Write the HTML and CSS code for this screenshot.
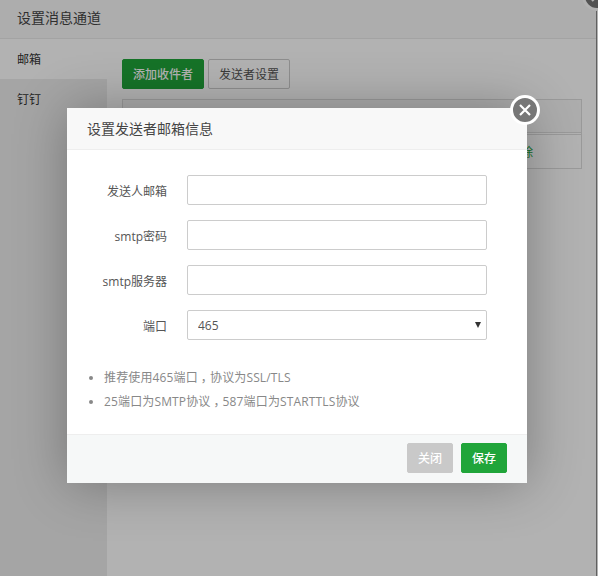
FILE: index.html
```html
<!DOCTYPE html>
<html lang="zh-CN">
<head>
<meta charset="utf-8">
<title>设置消息通道</title>
<link rel="stylesheet" href="styles.css">
</head>
<body>
<div class="panel">
  <div class="panel-title">设置消息通道</div>
  <div class="panel-body">
    <ul class="tabs">
      <li class="tab tab-active">邮箱</li>
      <li class="tab">钉钉</li>
    </ul>
    <div class="content">
      <div class="toolbar">
        <button class="btn btn-green">添加收件者</button>
        <button class="btn btn-plain">发送者设置</button>
      </div>
      <div class="table">
        <div class="row row-head"></div>
        <div class="row row-data"><a class="link">删除</a></div>
      </div>
    </div>
  </div>
  <button class="close close-panel" aria-label="关闭">
    <svg viewBox="0 0 24 24" class="close-icon"><path d="M6 6L18 18M18 6L6 18"/></svg>
  </button>
</div>
<div class="shade"></div>
<div class="modal">
  <div class="modal-title">设置发送者邮箱信息</div>
  <div class="modal-body">
    <form class="form">
      <label class="field"><span class="label">发送人邮箱</span><input class="input" type="text"></label>
      <label class="field"><span class="label">smtp密码</span><input class="input" type="text"></label>
      <label class="field"><span class="label">smtp服务器</span><input class="input" type="text"></label>
      <label class="field"><span class="label">端口</span>
        <span class="select-wrap"><select class="input select"><option>465</option><option>25</option><option>587</option></select></span>
      </label>
    </form>
    <ul class="tips">
      <li>推荐使用465端口<span class="comma">，</span>协议为SSL/TLS</li>
      <li>25端口为SMTP协议<span class="comma">，</span>587端口为STARTTLS协议</li>
    </ul>
  </div>
  <div class="modal-foot">
    <button class="btn btn-grey">关闭</button>
    <button class="btn btn-save">保存</button>
  </div>
  <button class="close close-modal" aria-label="关闭">
    <svg viewBox="0 0 24 24" class="close-icon"><path d="M6 6L18 18M18 6L6 18"/></svg>
  </button>
</div>
</body>
</html>
```
FILE: styles.css
```css
* { box-sizing: border-box; }
html, body { margin: 0; height: 100%; overflow: hidden; }
body {
  width: 598px;
  height: 576px;
  background: #fff;
  font-family: "Open Sans", "Noto Sans CJK SC", sans-serif;
  font-size: 12px;
  color: #555;
  position: relative;
}
button { font-family: inherit; cursor: pointer; }
ul { margin: 0; padding: 0; }

.panel {
  width: 597px;
  height: 576px;
  border-right: 1px solid #8a8a8a;
  background: #fff;
  position: relative;
}
.panel-title {
  height: 39px;
  padding-left: 17px;
  line-height: 35px;
  font-size: 14px;
  color: #444;
  background: #f8f8f8;
  border-bottom: 1px solid #eaeaea;
}
.panel-body { display: flex; height: 537px; }
.tabs { width: 107px; list-style: none; background: #ededed; }
.tab { height: 40px; line-height: 42px; padding-left: 17px; color: #333; }
.tab-active { background: #fff; }
.content { flex: 1; padding: 20px 14px 0 15px; }
.toolbar { display: flex; gap: 4px; }
.btn {
  width: 82px;
  height: 30px;
  padding: 0;
  border-radius: 2px;
  font-size: 12px;
  border: 1px solid transparent;
}
.btn-green { background: #20a53a; color: #fff; border-color: #20a53a; font-weight: 500; }
.btn-plain { background: #fff; color: #555; border-color: #ccc; }
.table { margin-top: 10px; width: 460px; border: 1px solid #ddd; }
.row { display: flex; justify-content: flex-end; align-items: center; padding-right: 48px; }
.row-head { height: 33px; margin-bottom: 1px; background: #f8f8f8; border-bottom: 1px solid #ddd; }
.row-data { height: 34px; border-top: 1px solid #ddd; }
.link { color: #20a53a; }

.close {
  position: absolute;
  width: 30px;
  height: 30px;
  padding: 0;
  border: 3px solid #fff;
  border-radius: 50%;
  background: #777;
  display: flex;
  align-items: center;
  justify-content: center;
}
.close-panel { top: -19px; right: -16px; }
.close-modal { top: -13px; right: -13px; }
.close-icon { width: 20px; height: 20px; fill: none; stroke: #fff; stroke-width: 2.6; }

.shade { position: absolute; inset: 0; background: rgba(0, 0, 0, .3); }

.modal {
  position: absolute;
  left: 67px;
  top: 108px;
  width: 460px;
  height: 375px;
  background: #fff;
  box-shadow: 1px 1px 50px rgba(0, 0, 0, .3);
  display: flex;
  flex-direction: column;
}
.modal-title {
  height: 42px;
  padding-left: 20px;
  line-height: 41px;
  font-size: 14px;
  color: #444;
  background: #f8f8f8;
  border-bottom: 1px solid #eee;
}
.modal-body { flex: 1; padding-top: 25px; }
.form { display: flex; flex-direction: column; gap: 15px; }
.field { display: flex; align-items: center; gap: 20px; height: 30px; }
.label { width: 100px; padding-top: 2px; text-align: right; color: #555; }
.input {
  width: 300px;
  height: 30px;
  border: 1px solid #ccc;
  border-radius: 2px;
  background: #fff;
  padding: 0 10px;
  font-family: inherit;
  font-size: 12px;
  color: #555;
  outline: none;
}
.select-wrap { position: relative; display: block; width: 300px; height: 30px; }
.select { display: block; appearance: none; -webkit-appearance: none; }
.select-wrap::after {
  content: "";
  position: absolute;
  right: 6px;
  top: 12px;
  border-left: 3.5px solid transparent;
  border-right: 3.5px solid transparent;
  border-top: 6px solid #333;
}
.tips { margin-top: 26px; padding-left: 37px; color: #888; letter-spacing: .14px; }
.tips li { line-height: 24px; }
.tips li::marker { color: #888; }
.comma { font-feature-settings: "halt"; margin: 0 3px; }
.modal-foot {
  height: 49px;
  padding: 8px 20px 0 0;
  display: flex;
  justify-content: flex-end;
  gap: 8px;
  background: #f6f8f8;
  border-top: 1px solid #eee;
}
.btn-grey, .btn-save { width: 46px; font-weight: 500; color: #fff; }
.btn-grey { background: #c9c9c9; border-color: #c9c9c9; }
.btn-save { background: #20a53a; border-color: #20a53a; }
```
